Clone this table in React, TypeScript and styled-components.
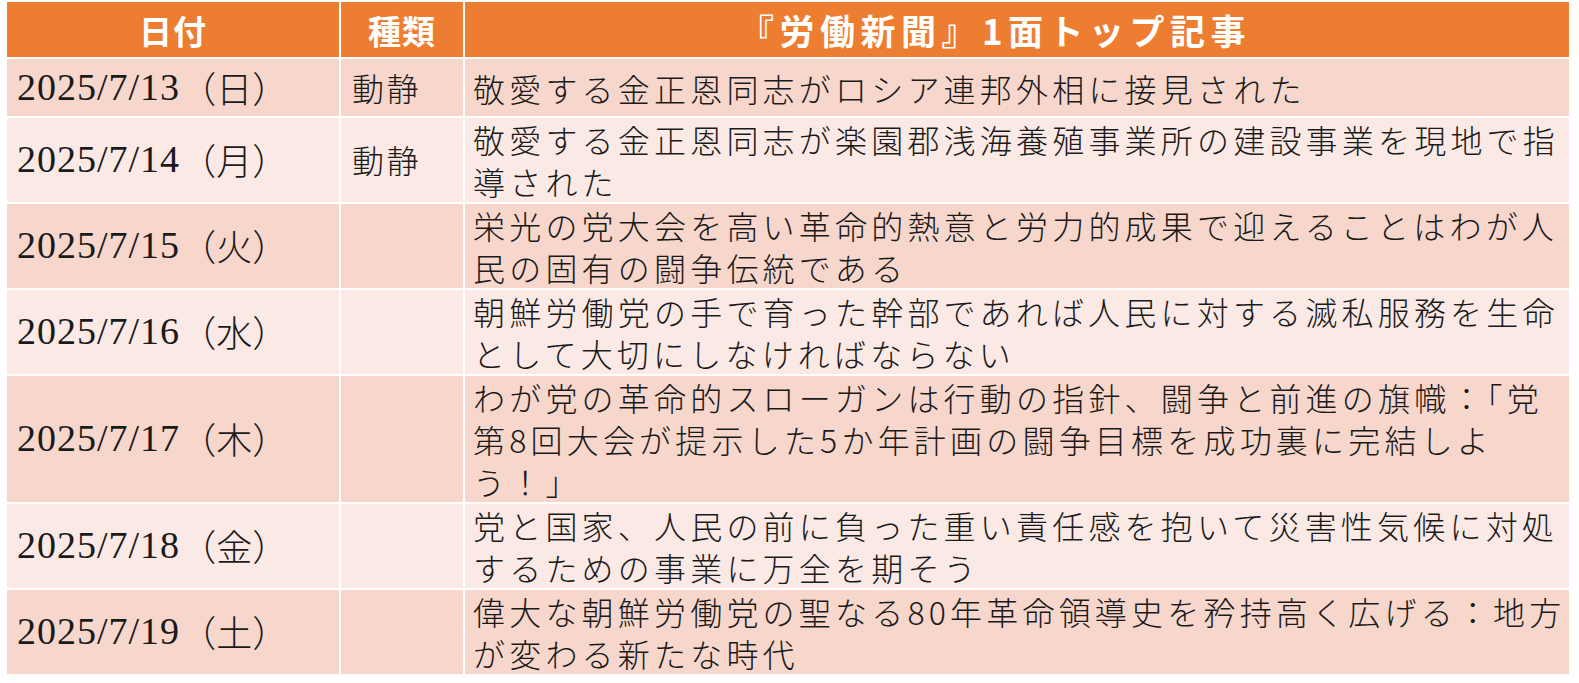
import styled, { createGlobalStyle } from 'styled-components';

const GlobalStyle = createGlobalStyle`
  html, body {
    margin: 0;
    padding: 0;
    background: #fff;
  }
  body {
    font-family: 'Noto Sans CJK JP', 'Noto Sans', sans-serif;
    color: #1a1a1a;
  }
`;

const Page = styled.div`
  padding: 2px 10px 0 7px;
`;

const Table = styled.div`
  display: flex;
  flex-direction: column;
  gap: 2px;
  width: 1562px;
  background: #fff;
`;

const Row = styled.div<{ $header?: boolean }>`
  display: grid;
  grid-template-columns: 332px 122px 1fr;
  gap: 2px;
  min-height: ${p => (p.$header ? '55px' : '57px')};
`;

const HeadCell = styled.div<{ $wide?: boolean }>`
  display: flex;
  align-items: center;
  justify-content: center;
  padding-right: ${p => (p.$wide ? '44px' : '0')};
  background: #ed7d31;
  color: #fff;
  font-weight: 700;
  font-size: ${p => (p.$wide ? '35px' : '33px')};
  letter-spacing: ${p => (p.$wide ? '5.5px' : '1px')};
`;

const Cell = styled.div<{ $dark: boolean }>`
  display: flex;
  align-items: center;
  background: ${p => (p.$dark ? '#f7d6cc' : '#fae9e5')};
`;

const DateCell = styled(Cell)`
  padding: 0 0 2px 10px;
  font-family: 'Liberation Serif', 'Noto Sans CJK JP', serif;
  font-size: 38px;
  letter-spacing: 1px;
`;

const Weekday = styled.span`
  font-family: 'Noto Sans CJK JP', sans-serif;
  font-size: 36px;
  font-weight: 300;
  letter-spacing: 0;
`;

const KindCell = styled(Cell)`
  padding: 0 0 2px 11px;
  font-size: 32px;
  font-weight: 300;
  letter-spacing: 2.5px;
`;

const TitleCell = styled(Cell)`
  padding: 0 0 0 8px;
  font-size: 32px;
  font-weight: 300;
  letter-spacing: 4.2px;
  line-height: 42px;
  white-space: nowrap;
`;

const Lines = styled.div`
  display: flex;
  flex-direction: column;
`;

type Item = { date: string; day: string; kind: string; lines: string[] };

const items: Item[] = [
  { date: '2025/7/13', day: '（日）', kind: '動静', lines: ['敬愛する金正恩同志がロシア連邦外相に接見された'] },
  {
    date: '2025/7/14',
    day: '（月）',
    kind: '動静',
    lines: ['敬愛する金正恩同志が楽園郡浅海養殖事業所の建設事業を現地で指', '導された'],
  },
  {
    date: '2025/7/15',
    day: '（火）',
    kind: '',
    lines: ['栄光の党大会を高い革命的熱意と労力的成果で迎えることはわが人', '民の固有の闘争伝統である'],
  },
  {
    date: '2025/7/16',
    day: '（水）',
    kind: '',
    lines: ['朝鮮労働党の手で育った幹部であれば人民に対する滅私服務を生命', 'として大切にしなければならない'],
  },
  {
    date: '2025/7/17',
    day: '（木）',
    kind: '',
    lines: [
      'わが党の革命的スローガンは行動の指針、闘争と前進の旗幟：「党',
      '第8回大会が提示した5か年計画の闘争目標を成功裏に完結しよ',
      'う！」',
    ],
  },
  {
    date: '2025/7/18',
    day: '（金）',
    kind: '',
    lines: ['党と国家、人民の前に負った重い責任感を抱いて災害性気候に対処', 'するための事業に万全を期そう'],
  },
  {
    date: '2025/7/19',
    day: '（土）',
    kind: '',
    lines: ['偉大な朝鮮労働党の聖なる80年革命領導史を矜持高く広げる：地方', 'が変わる新たな時代'],
  },
];

export default function App() {
  return (
    <Page>
      <GlobalStyle />
      <Table>
        <Row $header>
          <HeadCell>日付</HeadCell>
          <HeadCell>種類</HeadCell>
          <HeadCell $wide>『労働新聞』1面トップ記事</HeadCell>
        </Row>
        {items.map((item, i) => {
          const dark = i % 2 === 0;
          return (
            <Row key={item.date}>
              <DateCell $dark={dark}>
                {item.date}
                <Weekday>{item.day}</Weekday>
              </DateCell>
              <KindCell $dark={dark}>{item.kind}</KindCell>
              <TitleCell $dark={dark}>
                <Lines>
                  {item.lines.map(line => (
                    <span key={line}>{line}</span>
                  ))}
                </Lines>
              </TitleCell>
            </Row>
          );
        })}
      </Table>
    </Page>
  );
}
